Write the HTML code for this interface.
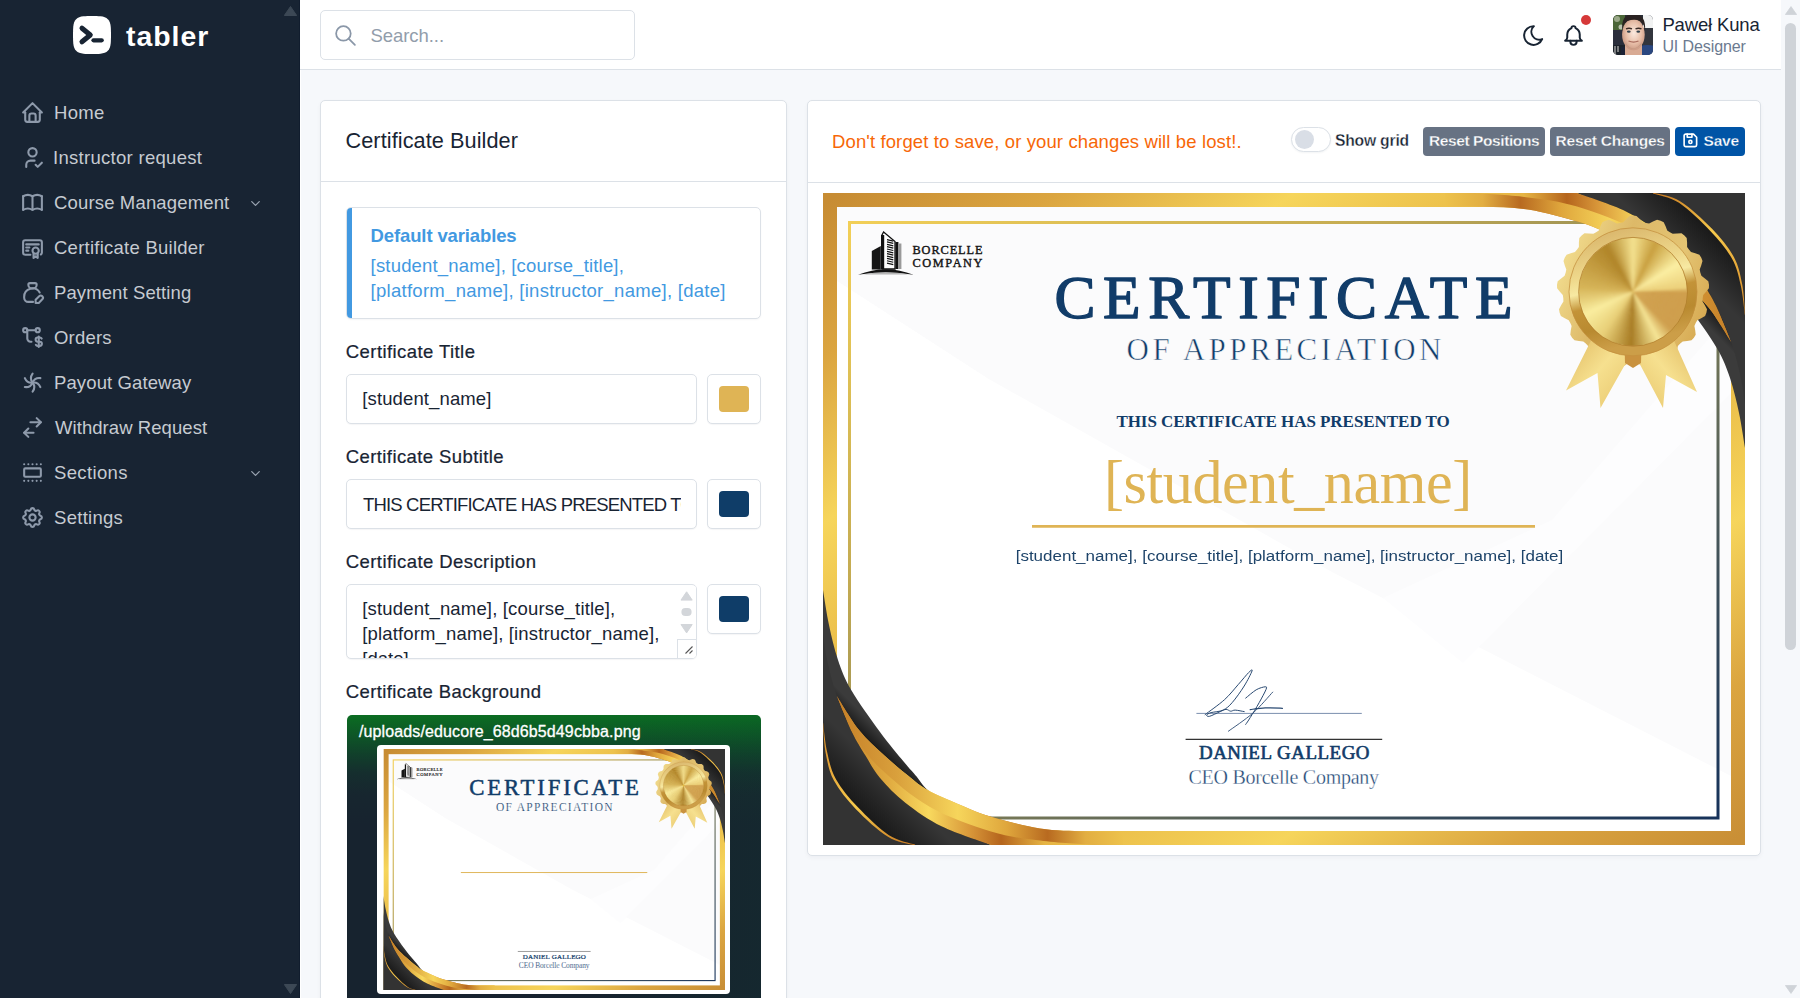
<!DOCTYPE html>
<html lang="en">
<head>
<meta charset="utf-8">
<title>Certificate Builder</title>
<style>
*{box-sizing:border-box;margin:0;padding:0}
html,body{width:1800px;height:998px;overflow:hidden}
body{background:#f6f8fb;font-family:"Liberation Sans",Arial,sans-serif;color:#182433;font-size:17.5px;position:relative}
.abs{position:absolute}
.t{position:absolute;white-space:pre;line-height:1}
svg{display:block}
.ico{fill:none;stroke:currentColor;stroke-width:2;stroke-linecap:round;stroke-linejoin:round}
/* sidebar */
.sidebar{position:absolute;left:0;top:0;width:300px;height:998px;background:#182433;box-shadow:1px 0 0 #fff;border-right:1px solid #111d2e}
.brand{position:absolute;left:73px;top:16px;width:38px;height:38px}
.brandtxt{left:125px;top:19px;font-size:28.4px;font-weight:700;color:#fff;letter-spacing:.9px;line-height:32px}
.nav{position:absolute;left:0;top:90px;width:281px;list-style:none}
.nav li{position:relative;height:45px}
.nav li svg.i{position:absolute;left:19.5px;top:9.5px;width:25px;height:25px;color:#8e9aab}
.nav li svg.chev{position:absolute;left:248px;top:16px;width:15px;height:15px;color:#9aa4b1;stroke-width:2}
.sarrow{position:absolute;left:284px;width:13px;height:10px;fill:#3c4855}
/* header */
.header{position:absolute;left:300px;top:0;width:1481px;height:70px;background:#fff;border-bottom:1px solid #dce1e7}
.search{position:absolute;left:20px;top:10px;width:315px;height:50px;border:1px solid #dce1e7;border-radius:5px;background:#fff}
.search svg{position:absolute;left:11.5px;top:11.5px;width:25px;height:25px;color:#8a97a8;stroke-width:1.7}
.hicon{position:absolute;width:25px;height:25px;color:#182433;stroke-width:1.9}
.dot{position:absolute;left:1280.5px;top:15px;width:10px;height:10px;border-radius:50%;background:#d63939}
.avatar{position:absolute;left:1312.5px;top:15px;width:40px;height:40px;border-radius:5px;overflow:hidden}
.uname{left:1362.5px;top:15px;font-size:17.5px;color:#182433;line-height:20px}
.urole{left:1362.5px;top:38px;font-size:15px;color:#6b7a90;line-height:18px}
/* scrollbar */
.vscroll{position:absolute;left:1781px;top:0;width:19px;height:998px;background:#f6f8fb}
.vscroll i{position:absolute;left:4px;top:23px;width:11px;height:627px;border-radius:6px;background:#cfd3d8}
.vscroll svg{position:absolute;left:3.5px;width:12px;height:9px;fill:#cfd3d8}
/* cards */
.card{position:absolute;background:#fff;border:1px solid #dce1e7;border-radius:5px;box-shadow:0 2px 4px rgba(24,36,51,.04)}
.card .hd{position:absolute;left:0;top:0;right:0;border-bottom:1px solid #dce1e7}
.lbl{font-size:17.5px;color:#182433;-webkit-text-stroke:.22px #182433}
.inp{position:absolute;height:50px;border:1px solid #dce1e7;border-radius:5px;background:#fff;overflow:hidden;box-shadow:0 1px 1px rgba(24,36,51,.04)}
.clr{position:absolute;width:54px;height:50px;border:1px solid #dce1e7;border-radius:5px;background:#fff;box-shadow:0 1px 1px rgba(24,36,51,.04)}
.clr i{position:absolute;left:10.5px;top:10.5px;width:30px;height:26px;border-radius:4px}
.btn{position:absolute;top:26px;height:29px;border-radius:4px;color:#fff;font-weight:700;font-size:15px}
</style>
</head>
<body>
<aside class="sidebar">
  <svg class="brand" viewBox="0 0 38 38"><path d="M10.500 .3C15 -.1 23 -.1 27.500 .3C34 .9 37.100 4 37.700 10.500C38.100 15 38.100 23 37.700 27.500C37.100 34 34 37.100 27.500 37.700C23 38.100 15 38.100 10.500 37.700C4 37.100 .9 34 .3 27.500C-.1 23 -.1 15 .3 10.500C.9 4 4 .9 10.500 .3Z" fill="#fff"/><path d="M9 12.200l8.300 6.800l-8.300 6.800" fill="none" stroke="#182433" stroke-width="5" stroke-linecap="round" stroke-linejoin="round"/><path d="M20.500 24.300h8.200" fill="none" stroke="#182433" stroke-width="4.300" stroke-linecap="round"/></svg>
  <span class="t" style="left:126.00px;top:22.00px;font-size:28.4px;font-weight:700;letter-spacing:1.000px;color:#fff;">tabler</span>
  <ul class="nav">
    <li><svg class="i ico" viewBox="0 0 24 24"><path d="M5 12l-2 0l9 -9l9 9l-2 0"/><path d="M5 12v7a2 2 0 0 0 2 2h10a2 2 0 0 0 2 -2v-7"/><path d="M9 21v-6a2 2 0 0 1 2 -2h2a2 2 0 0 1 2 2v6"/></svg><span class="t" style="left:54.00px;top:14.00px;font-size:18.5px;letter-spacing:0.333px;color:#c6cbd1;">Home</span></li>
    <li><svg class="i ico" viewBox="0 0 24 24"><path d="M8 7a4 4 0 1 0 8 0a4 4 0 0 0 -8 0"/><path d="M6 21v-2a4 4 0 0 1 4 -4h4"/><path d="M15 19l2 2l4 -4"/></svg><span class="t" style="left:53.00px;top:14.00px;font-size:18.5px;letter-spacing:0.294px;color:#c6cbd1;">Instructor request</span></li>
    <li><svg class="i ico" viewBox="0 0 24 24"><path d="M3 19a9 9 0 0 1 9 0a9 9 0 0 1 9 0"/><path d="M3 6a9 9 0 0 1 9 0a9 9 0 0 1 9 0"/><path d="M3 6l0 13"/><path d="M12 6l0 13"/><path d="M21 6l0 13"/></svg><span class="t" style="left:54.00px;top:14.00px;font-size:18.5px;letter-spacing:0.156px;color:#c6cbd1;">Course Management</span><svg class="chev ico" viewBox="0 0 24 24"><path d="M6 9l6 6l6 -6"/></svg></li>
    <li><svg class="i ico" viewBox="0 0 24 24"><path d="M15 15m-3 0a3 3 0 1 0 6 0a3 3 0 1 0 -6 0"/><path d="M13 17.500v4.500l2 -1.500l2 1.500v-4.500"/><path d="M10 19h-5a2 2 0 0 1 -2 -2v-10c0 -1.100 .9 -2 2 -2h14a2 2 0 0 1 2 2v10a2 2 0 0 1 -1 1.730"/><path d="M6 9l12 0"/><path d="M6 12l3 0"/><path d="M6 15l2 0"/></svg><span class="t" style="left:54.00px;top:14.00px;font-size:18.5px;letter-spacing:0.250px;color:#c6cbd1;">Certificate Builder</span></li>
    <li><svg class="i ico" viewBox="0 0 24 24"><path d="M9.500 3h5a1.500 1.500 0 0 1 1.500 1.500a3.500 3.500 0 0 1 -3.500 3.500h-1a3.500 3.500 0 0 1 -3.500 -3.500a1.500 1.500 0 0 1 1.500 -1.500"/><path d="M12.500 21h-4.500a4 4 0 0 1 -4 -4v-1a8 8 0 0 1 14.900 -4"/><path d="M18.420 15.610a2.100 2.100 0 0 1 2.970 2.970l-3.390 3.420h-3v-3l3.420 -3.390z"/></svg><span class="t" style="left:54.00px;top:14.00px;font-size:18.5px;letter-spacing:0.107px;color:#c6cbd1;">Payment Setting</span></li>
    <li><svg class="i ico" viewBox="0 0 24 24"><path d="M20.800 13a2 2 0 0 0 -1.800 -1h-2a2 2 0 1 0 0 4h2a2 2 0 1 1 0 4h-2a2 2 0 0 1 -1.800 -1"/><path d="M18 11v10"/><path d="M3 5a2 2 0 1 0 4 0a2 2 0 1 0 -4 0"/><path d="M15 5a2 2 0 1 0 4 0a2 2 0 1 0 -4 0"/><path d="M7 5h8"/><path d="M7 5v8a3 3 0 0 0 3 3h1"/></svg><span class="t" style="left:54.00px;top:14.00px;font-size:18.5px;letter-spacing:0.200px;color:#c6cbd1;">Orders</span></li>
    <li><svg class="i ico" viewBox="0 0 24 24"><path d="M12.1 12.1Q8.82 7.90 12.10 3.50"/><path d="M12.1 12.1Q14.10 7.16 19.55 7.80"/><path d="M12.1 12.1Q17.38 11.36 19.55 16.40"/><path d="M12.1 12.1Q15.38 16.30 12.10 20.70"/><path d="M12.1 12.1Q10.10 17.04 4.65 16.40"/><path d="M12.1 12.1Q6.82 12.84 4.65 7.80"/></svg><span class="t" style="left:54.00px;top:14.00px;font-size:18.5px;letter-spacing:0.115px;color:#c6cbd1;">Payout Gateway</span></li>
    <li><svg class="i ico" viewBox="0 0 24 24"><path d="M16 3l4 4l-4 4"/><path d="M10 7l10 0"/><path d="M8 13l-4 4l4 4"/><path d="M4 17l9 0"/></svg><span class="t" style="left:55.00px;top:14.00px;font-size:18.5px;letter-spacing:0.067px;color:#c6cbd1;">Withdraw Request</span></li>
    <li><svg class="i ico" viewBox="0 0 24 24"><path d="M20 20h.01"/><path d="M4 20h.01"/><path d="M8 20h.01"/><path d="M12 20h.01"/><path d="M16 20h.01"/><path d="M20 4h.01"/><path d="M4 4h.01"/><path d="M8 4h.01"/><path d="M12 4h.01"/><path d="M16 4h.01"/><path d="M4 8m0 1a1 1 0 0 1 1 -1h14a1 1 0 0 1 1 1v6a1 1 0 0 1 -1 1h-14a1 1 0 0 1 -1 -1z"/></svg><span class="t" style="left:54.00px;top:14.00px;font-size:18.5px;letter-spacing:0.357px;color:#c6cbd1;">Sections</span><svg class="chev ico" viewBox="0 0 24 24"><path d="M6 9l6 6l6 -6"/></svg></li>
    <li><svg class="i ico" viewBox="0 0 24 24"><path d="M10.325 4.317c.426 -1.756 2.924 -1.756 3.350 0a1.724 1.724 0 0 0 2.573 1.066c1.543 -.940 3.310 .826 2.370 2.370a1.724 1.724 0 0 0 1.065 2.572c1.756 .426 1.756 2.924 0 3.350a1.724 1.724 0 0 0 -1.066 2.573c.940 1.543 -.826 3.310 -2.370 2.370a1.724 1.724 0 0 0 -2.572 1.065c-.426 1.756 -2.924 1.756 -3.350 0a1.724 1.724 0 0 0 -2.573 -1.066c-1.543 .940 -3.310 -.826 -2.370 -2.370a1.724 1.724 0 0 0 -1.065 -2.572c-1.756 -.426 -1.756 -2.924 0 -3.350a1.724 1.724 0 0 0 1.066 -2.573c-.940 -1.543 .826 -3.310 2.370 -2.370c1 .608 2.296 .070 2.572 -1.065z"/><path d="M9 12a3 3 0 1 0 6 0a3 3 0 0 0 -6 0"/></svg><span class="t" style="left:54.00px;top:14.00px;font-size:18.5px;letter-spacing:0.286px;color:#c6cbd1;">Settings</span></li>
  </ul>
  <svg class="sarrow" style="top:6px" viewBox="0 0 13 10"><path d="M6.500 0.500L12.700 9.500H0.300Z" stroke="#3c4855" stroke-width="1" stroke-linejoin="round"/></svg>
  <svg class="sarrow" style="top:984px" viewBox="0 0 13 10"><path d="M6.500 9.500L12.700 0.500H0.300Z" stroke="#3c4855" stroke-width="1" stroke-linejoin="round"/></svg>
</aside>
<header class="header">
  <div class="search"><svg class="ico" viewBox="0 0 24 24"><path d="M10 10m-7 0a7 7 0 1 0 14 0a7 7 0 1 0 -14 0"/><path d="M21 21l-6 -6"/></svg><span class="t" style="left:49.50px;top:16.00px;font-size:18.5px;letter-spacing:-0.062px;color:#929dab;">Search...</span></div>
  <svg class="hicon ico" style="left:1220.500px;top:22.800px" viewBox="0 0 24 24"><path d="M12 3c.132 0 .263 0 .393 0a7.500 7.500 0 0 0 7.920 12.446a9 9 0 1 1 -8.313 -12.454z"/></svg>
  <svg class="hicon ico" style="left:1260.700px;top:22.800px" viewBox="0 0 24 24"><path d="M10 5a2 2 0 1 1 4 0a7 7 0 0 1 4 6v3a4 4 0 0 0 2 3h-16a4 4 0 0 0 2 -3v-3a7 7 0 0 1 4 -6"/><path d="M9 17v1a3 3 0 0 0 6 0v-1"/></svg>
  <i class="dot"></i>
  <div class="avatar"><svg viewBox="0 0 40 40" width="40" height="40"><defs><filter id="avb" x="-10%" y="-10%" width="120%" height="120%"><feGaussianBlur stdDeviation=".55"/></filter><radialGradient id="avskin" cx=".52" cy=".45" r=".6"><stop offset="0" stop-color="#fbe9df"/><stop offset=".55" stop-color="#e9c0aa"/><stop offset="1" stop-color="#c4907a"/></radialGradient></defs><rect width="40" height="40" fill="#2a2e38"/><g filter="url(#avb)"><rect x="-2" y="-2" width="14" height="17" fill="#4b6638"/><circle cx="4" cy="4" r="3" fill="#9aa889"/><circle cx="8" cy="12" r="2.500" fill="#b9c2ae"/><rect x="30" y="-2" width="12" height="15" fill="#f1f2f2"/><rect x="-2" y="15" width="14" height="17" fill="#2b2f3a"/><rect x="30" y="13" width="12" height="18" fill="#30343e"/><path d="M-2 42V30H12V42Z" fill="#1d212c"/><path d="M2 31v8M5 31v6" stroke="#d8d8d0" stroke-width="1"/><path d="M27 42V31Q34 29 42 31V42Z" fill="#2a4680"/><path d="M8 42V32H14V42Z" fill="#1b2236"/><path d="M12 42V29H29V42Z" fill="#d9ab94"/><ellipse cx="20.400" cy="19.500" rx="11.300" ry="15.800" fill="url(#avskin)"/><path d="M9.300 16.500Q7.500 -1 20.500 -1.500Q33.500 -1 32 16.500L30.800 10.500Q28.500 5.800 24 5Q19 4.300 14.500 6Q11.500 7.500 10.500 11Z" fill="#2a2220"/><path d="M13 13.800q3 -1.200 6 0M22.500 13.800q3 -1.200 6 0" stroke="#3a2b26" stroke-width="1.400" fill="none"/><ellipse cx="15.800" cy="16.600" rx="1.900" ry="1.200" fill="#33424d"/><ellipse cx="25.300" cy="16.600" rx="1.900" ry="1.200" fill="#33424d"/><path d="M15.500 26q5 2.200 10 0" stroke="#a86a5c" stroke-width="1.300" fill="none"/><path d="M12 27Q20 40 29 27Q27 33 20 34Q14 33 12 27Z" fill="#b98d78" opacity=".6"/></g></svg></div>
  <span class="t" style="left:1362.40px;top:16.00px;font-size:18.5px;letter-spacing:-0.156px;color:#182433;">Paweł Kuna</span>
  <span class="t" style="left:1362.40px;top:39.00px;font-size:16px;letter-spacing:-0.100px;color:#6b7a90;">UI Designer</span>
</header>
<div class="vscroll"><svg style="top:6px" viewBox="0 0 12 9"><path d="M6 .6L11.600 8.500H.4Z" stroke="#cfd3d8" stroke-width=".8" stroke-linejoin="round"/></svg><i></i><svg style="top:984.500px" viewBox="0 0 12 9"><path d="M6 8.400L11.600 .5H.4Z" stroke="#cfd3d8" stroke-width=".8" stroke-linejoin="round"/></svg></div>
<main>
<section class="card" style="left:320px;top:100px;width:467px;height:920px;border-bottom-left-radius:0;border-bottom-right-radius:0">
  <div class="hd" style="height:81px"></div>
  <h3 class="t" style="left:24.50px;top:29.00px;font-size:21.7px;letter-spacing:0.072px;font-weight:400;">Certificate Builder</h3>
  <div class="abs" style="left:25px;top:106px;width:415px;height:111.500px;border:1px solid #dce1e7;border-radius:5px;background:#fff;overflow:hidden;box-shadow:0 1px 2px rgba(24,36,51,.04)"><i class="abs" style="left:0;top:0;width:5px;height:111px;background:#4299e1"></i></div>
  <h4 class="t" style="left:49.60px;top:126.00px;font-size:18.5px;font-weight:700;letter-spacing:-0.125px;color:#4299e1;">Default variables</h4>
  <span class="t" style="left:49.60px;top:156.00px;font-size:18.5px;letter-spacing:0.180px;color:#4299e1;">[student_name], [course_title],</span>
  <span class="t" style="left:49.60px;top:181.00px;font-size:18.5px;letter-spacing:0.278px;color:#4299e1;">[platform_name], [instructor_name], [date]</span>
  <label class="t lbl" style="left:24.80px;top:242.00px;font-size:18.5px;letter-spacing:0.425px;">Certificate Title</label>
  <div class="inp" style="left:25px;top:273px;width:351px"><span class="t" style="left:15.30px;top:15.00px;font-size:18.5px;letter-spacing:0.123px;">[student_name]</span></div>
  <div class="clr" style="left:386px;top:273px"><i style="background:#dfb455"></i></div>
  <label class="t lbl" style="left:24.80px;top:347.00px;font-size:18.5px;letter-spacing:0.400px;">Certificate Subtitle</label>
  <div class="inp" style="left:25px;top:378px;width:351px;height:49.500px"><div class="abs" style="left:0;top:0;width:334.200px;height:47px;overflow:hidden"><span class="t" style="left:16.00px;top:16.00px;font-size:18.5px;letter-spacing:-0.835px;">THIS CERTIFICATE HAS PRESENTED TO</span></div></div>
  <div class="clr" style="left:386px;top:378px;height:49.500px"><i style="background:#0f3d68"></i></div>
  <label class="t lbl" style="left:24.80px;top:452.00px;font-size:18.5px;letter-spacing:0.418px;">Certificate Description</label>
  <div class="inp" style="left:25px;top:483px;width:351px;height:75px">
    <span class="t" style="left:15.30px;top:15.00px;font-size:18.5px;letter-spacing:0.167px;">[student_name], [course_title],</span>
    <span class="t" style="left:15.30px;top:40.00px;font-size:18.5px;letter-spacing:0.147px;">[platform_name], [instructor_name],</span>
    <span class="t" style="left:15.30px;top:65.00px;font-size:18.5px;">[date]</span>
    <svg class="abs" style="left:330px;top:1px;width:19px;height:72px" viewBox="0 0 19 72"><rect width="19" height="72" fill="#fff"/><path d="M9.600 5.800L15.200 14.100H4Z" fill="#d3d6da" stroke="#d3d6da" stroke-width="1" stroke-linejoin="round"/><rect x="4.400" y="21.900" width="10.200" height="8.100" rx="4" fill="#d3d6da"/><path d="M9.600 46.900L15.200 38.500H4Z" fill="#d3d6da" stroke="#d3d6da" stroke-width="1" stroke-linejoin="round"/><rect x=".5" y="53.500" width="19" height="19" fill="#fff" stroke="#dce1e7"/><path d="M8.500 67.500L15.500 60.500M12.500 67.500L15.500 64.500" stroke="#555" stroke-width="1.100" fill="none"/></svg>
  </div>
  <div class="clr" style="left:386px;top:483px"><i style="background:#0f3d68"></i></div>
  <label class="t lbl" style="left:24.80px;top:582.00px;font-size:18.5px;letter-spacing:0.381px;">Certificate Background</label>
  <div class="abs" style="left:26px;top:614px;width:413.500px;height:310px;border-radius:5px 5px 0 0;background:linear-gradient(90deg,rgba(8,70,45,0) 55%,rgba(8,70,45,.13)),linear-gradient(180deg,#0b6d22 0px,#0e5427 22px,#113f2b 40px,#152e2e 58px,#17262f 80px,#17232f 110px)">
    <span class="t" style="left:12.00px;top:9.00px;font-size:16px;letter-spacing:0.121px;color:#fff;-webkit-text-stroke:.3px #fff;">/uploads/educore_68d6b5d49cbba.png</span>
    <div class="abs" style="left:30.300px;top:30px;width:353px;height:249px;background:#fff;border-radius:4px"></div>
    <svg class="abs" style="left:35.600px;top:33.800px;width:342.500px;height:241.600px" viewBox="0 0 922 652"><use href="#certbg"/></svg>
  </div>
</section>

<section class="card" style="left:807px;top:100px;width:954px;height:756px">
  <div class="hd" style="height:82px"></div>
  <span class="t" style="left:24.00px;top:32.00px;font-size:18.5px;letter-spacing:0.118px;color:#f76707;">Don't forget to save, or your changes will be lost!.</span>
  <div class="abs" style="left:483px;top:26px;width:40px;height:25px;border:1px solid #dce1e7;border-radius:13px;background:#fff;box-shadow:0 1px 2px rgba(24,36,51,.05)"><i class="abs" style="left:3px;top:2px;width:19px;height:19px;border-radius:50%;background:#d9dee6"></i></div>
  <span class="t" style="left:527.00px;top:32.00px;font-size:15.7px;font-weight:700;letter-spacing:-0.213px;-webkit-text-stroke:.3px #fff;">Show grid</span>
  <div class="btn" style="left:615px;width:122px;background:#677283"><span class="t" style="left:6.00px;top:6.00px;font-size:15.5px;font-weight:700;letter-spacing:-0.407px;color:#fff;-webkit-text-stroke:.3px #677283;">Reset Positions</span></div>
  <div class="btn" style="left:742px;width:120px;background:#677283"><span class="t" style="left:5.60px;top:6.00px;font-size:15.5px;font-weight:700;letter-spacing:-0.217px;color:#fff;-webkit-text-stroke:.3px #677283;">Reset Changes</span></div>
  <div class="btn" style="left:867px;width:70px;background:#0054a6"><svg class="abs ico" style="left:6px;top:4.400px;width:18.750px;height:18.750px;stroke-width:2.100" viewBox="0 0 24 24"><path d="M6 4h10l4 4v10a2 2 0 0 1 -2 2h-12a2 2 0 0 1 -2 -2v-12a2 2 0 0 1 2 -2"/><path d="M12 14m-2 0a2 2 0 1 0 4 0a2 2 0 1 0 -4 0"/><path d="M14 4l0 4l-6 0l0 -4"/></svg><span class="t" style="left:28.50px;top:6.00px;font-size:15.5px;font-weight:700;letter-spacing:-0.167px;color:#fff;-webkit-text-stroke:.3px #0054a6;">Save</span></div>
  <div class="abs" id="certificate" style="left:15px;top:92px;width:922px;height:652px;overflow:hidden">
    <svg class="abs" style="left:0;top:0" width="922" height="652" viewBox="0 0 922 652">
<symbol id="certbg" viewBox="0 0 922 652">
<defs>
<linearGradient id="gGold" x1="0" y1="0" x2="1" y2="1"><stop offset="0" stop-color="#c78c33"/><stop offset=".12" stop-color="#dba540"/><stop offset=".25" stop-color="#f6d55b"/><stop offset=".35" stop-color="#ecc04b"/><stop offset=".5" stop-color="#e8ba47"/><stop offset=".65" stop-color="#ecc04b"/><stop offset=".75" stop-color="#f6d55b"/><stop offset=".88" stop-color="#dba540"/><stop offset="1" stop-color="#c98f36"/></linearGradient>
<linearGradient id="gInner" x1="0" y1="0" x2="1" y2="1"><stop offset="0" stop-color="#f2cf57"/><stop offset=".3" stop-color="#c4ab52"/><stop offset=".55" stop-color="#807f56"/><stop offset=".8" stop-color="#3d4f5a"/><stop offset="1" stop-color="#16325a"/></linearGradient>
<linearGradient id="gD1" gradientUnits="userSpaceOnUse" x1="0" y1="501" x2="10" y2="491"><stop offset="0" stop-color="#1d1d1d"/><stop offset="1" stop-color="#3b3b3b"/></linearGradient>
<linearGradient id="gD2" gradientUnits="userSpaceOnUse" x1="0" y1="580" x2="30" y2="550"><stop offset="0" stop-color="#191919"/><stop offset="1" stop-color="#363636"/></linearGradient>
<linearGradient id="gT" gradientUnits="userSpaceOnUse" x1="0" y1="534" x2="92" y2="652"><stop offset="0" stop-color="#d98c2a"/><stop offset=".55" stop-color="#f6c94c"/><stop offset="1" stop-color="#c6761f"/></linearGradient>
<linearGradient id="gBU" gradientUnits="userSpaceOnUse" x1="10" y1="0" x2="300" y2="0"><stop offset="0" stop-color="#c47d26"/><stop offset=".22" stop-color="#d9a03c"/><stop offset=".43" stop-color="#f6d55b"/><stop offset=".6" stop-color="#dfa63c"/><stop offset=".74" stop-color="#b86a20"/><stop offset=".87" stop-color="#e2ae42"/><stop offset="1" stop-color="#edc24c"/></linearGradient>
<linearGradient id="gBL" gradientUnits="userSpaceOnUse" x1="10" y1="0" x2="300" y2="0"><stop offset="0" stop-color="#c07a25"/><stop offset=".19" stop-color="#e0aa40"/><stop offset=".33" stop-color="#f8d95e"/><stop offset=".47" stop-color="#d9983a"/><stop offset=".58" stop-color="#b5651d"/><stop offset=".73" stop-color="#e6b544"/><stop offset="1" stop-color="#edc24c"/></linearGradient>
<linearGradient id="gRib" x1="0" y1="0" x2="1" y2="1"><stop offset="0" stop-color="#d9ad52"/><stop offset=".5" stop-color="#f6e08f"/><stop offset="1" stop-color="#e4bf63"/></linearGradient>
<linearGradient id="gRib2" x1="1" y1="0" x2="0" y2="1"><stop offset="0" stop-color="#d9ad52"/><stop offset=".5" stop-color="#f6e08f"/><stop offset="1" stop-color="#e4bf63"/></linearGradient>
<linearGradient id="gScal" x1="0" y1=".3" x2="1" y2=".7"><stop offset="0" stop-color="#f3de90"/><stop offset=".35" stop-color="#ddb968"/><stop offset=".7" stop-color="#e4c473"/><stop offset="1" stop-color="#d6a850"/></linearGradient>
<linearGradient id="gRing" x1="0" y1="0" x2=".25" y2="1"><stop offset="0" stop-color="#d7b268"/><stop offset=".38" stop-color="#efd98c"/><stop offset=".5" stop-color="#f7e9a2"/><stop offset=".63" stop-color="#c39338"/><stop offset=".82" stop-color="#b98a30"/><stop offset="1" stop-color="#cc9e48"/></linearGradient>
</defs>
<rect width="922" height="652" fill="#fff"/>
<path d="M14 14H908V583L509 379L164 185L14 88Z" fill="#fbfbfc"/>
<path d="M164 185L14 330V88Z" fill="#fff"/>
<path d="M729 327L908 120V200L640 470L560 405Z" fill="#fdfdfe"/>
<rect x="7" y="7" width="908" height="638" fill="none" stroke="url(#gGold)" stroke-width="14"/>
<rect x="26.500" y="29.500" width="868.500" height="595.500" fill="none" stroke="url(#gInner)" stroke-width="3"/>
<g id="crn"><path d="M0.0 397.0C1.0 402.8 3.5 420.3 6.0 432.0C8.5 443.7 11.3 456.2 15.0 467.0C18.7 477.8 21.2 485.0 28.2 497.0C35.2 509.0 48.2 527.0 57.0 539.0C65.8 551.0 74.9 561.6 81.0 569.0C87.1 576.4 89.7 578.9 93.6 583.6C97.5 588.3 97.7 590.6 104.6 597.0C111.5 603.4 124.8 612.8 135.0 622.0C145.2 631.2 160.8 647.0 166.0 652.0L0 652Z" fill="url(#gD1)"/>
<path d="M0.0 440.0C0.7 444.5 1.9 456.5 4.2 467.0C6.5 477.5 9.7 491.0 13.8 503.0C17.9 515.0 24.1 529.0 28.9 539.0C33.7 549.0 38.0 555.3 42.7 563.0C47.4 570.7 50.4 577.2 57.0 585.0C63.6 592.8 72.3 601.9 82.6 610.0C92.9 618.1 104.8 626.6 119.0 633.6C133.2 640.6 159.8 648.9 168.0 652.0L0 652Z" fill="url(#gD2)"/>
<path d="M0.0 530.0C0.6 535.0 1.5 550.5 3.5 560.0C5.5 569.5 7.0 577.8 12.0 587.0C17.0 596.2 24.8 605.7 33.7 615.0C42.6 624.3 55.8 636.8 65.5 643.0C75.2 649.2 87.6 650.5 92.0 652.0L0 652Z" fill="#333"/>
<path d="M-0.1 530.0C0.3 535.0 0.9 550.6 2.7 560.2C4.6 569.8 6.0 578.3 10.9 587.6C15.9 596.9 23.7 606.6 32.7 616.0C41.7 625.3 55.1 637.8 65.0 643.8C74.8 649.9 87.4 651.0 91.9 652.4L92.1 651.6C87.8 650.0 75.6 648.4 66.0 642.2C56.5 635.9 43.5 623.3 34.7 614.0C25.9 604.7 18.1 595.5 13.1 586.4C8.0 577.4 6.4 569.2 4.3 559.8C2.1 550.4 0.8 535.0 0.1 530.0Z" fill="url(#gT)"/>
<path d="M13.8 503.0C16.3 509.0 24.1 529.0 28.9 539.0C33.7 549.0 38.0 555.3 42.7 563.0C47.4 570.7 50.4 577.2 57.0 585.0C63.6 592.8 72.3 601.9 82.6 610.0C92.9 618.1 104.8 626.6 119.0 633.6C133.2 640.6 159.8 648.9 168.0 652.0L300 652L300.0 638.5C293.7 638.5 275.8 638.8 262.0 638.3C248.2 637.8 233.1 638.0 217.0 635.5C200.9 633.0 179.4 627.1 165.7 623.0C152.0 618.9 145.2 615.3 135.0 611.0C124.8 606.7 112.4 601.3 104.6 597.0C96.8 592.7 95.1 590.7 88.0 585.0C80.9 579.3 70.7 571.0 62.0 563.0C53.3 555.0 44.0 547.0 36.0 537.0C28.0 527.0 17.5 508.7 13.8 503.0Z" fill="url(#gBL)"/>
<path d="M13.8 503.0C17.5 508.7 28.0 527.0 36.0 537.0C44.0 547.0 53.3 555.0 62.0 563.0C70.7 571.0 80.9 579.3 88.0 585.0C95.1 590.7 96.8 592.7 104.6 597.0C112.4 601.3 124.8 606.7 135.0 611.0C145.2 615.3 152.0 618.9 165.7 623.0C179.4 627.1 200.9 633.0 217.0 635.5C233.1 638.0 248.2 637.8 262.0 638.3C275.8 638.8 293.7 638.5 300.0 638.5L300 652L270 652L270.0 652.0C261.2 651.3 234.0 649.9 217.0 647.6C200.0 645.4 186.3 644.1 168.0 638.5C149.7 632.9 125.3 624.4 107.0 614.0C88.7 603.6 70.3 587.5 58.0 576.0C45.7 564.5 40.4 557.2 33.0 545.0C25.6 532.8 17.0 510.0 13.8 503.0Z" fill="url(#gBU)"/></g>
<use href="#crn" transform="rotate(180 461 326)"/>
<path d="M209 333.400H712" stroke="#dfb455" stroke-width="2.600"/>
<path d="M35 81.800Q62.800 70.500 90.500 81.800Q62.800 76.500 35 81.800Z" fill="#111"/>
<path d="M40 81.500Q62.800 77 86 81.500Z" fill="#999" opacity=".7"/>
<path d="M48.800 76.500V58L57.800 53V76.500Z" fill="#151515"/>
<path d="M59 76V42L60.600 39L72 48.600V76Z" fill="#fff" stroke="#111" stroke-width="1.300" stroke-linejoin="miter"/>
<rect x="58" y="42" width="3.200" height="34" fill="#111"/>
<path d="M64 46.60L70.300 48.10" stroke="#111" stroke-width="1.250"/>
<path d="M64 48.95L70.300 50.45" stroke="#111" stroke-width="1.250"/>
<path d="M64 51.30L70.300 52.80" stroke="#111" stroke-width="1.250"/>
<path d="M64 53.65L70.300 55.15" stroke="#111" stroke-width="1.250"/>
<path d="M64 56.00L70.300 57.50" stroke="#111" stroke-width="1.250"/>
<path d="M64 58.35L70.300 59.85" stroke="#111" stroke-width="1.250"/>
<path d="M64 60.70L70.300 62.20" stroke="#111" stroke-width="1.250"/>
<path d="M64 63.05L70.300 64.55" stroke="#111" stroke-width="1.250"/>
<path d="M64 65.40L70.300 66.90" stroke="#111" stroke-width="1.250"/>
<path d="M64 67.75L70.300 69.25" stroke="#111" stroke-width="1.250"/>
<path d="M64 70.10L70.300 71.60" stroke="#111" stroke-width="1.250"/>
<rect x="72.400" y="49" width="3" height="27" fill="#111"/>
<rect x="75.400" y="50.500" width="3" height="25.500" fill="#9a9a9a"/>
<text x="89.500" y="60.700" style="font-family:'Liberation Serif','Times New Roman',serif;font-size:12.300px" fill="#141414" stroke="#141414" stroke-width=".4" textLength="70" lengthAdjust="spacing">BORCELLE</text>
<text x="89.500" y="74" style="font-family:'Liberation Serif','Times New Roman',serif;font-size:12.300px" fill="#141414" stroke="#141414" stroke-width=".4" textLength="70" lengthAdjust="spacing">COMPANY</text>
<text x="231.500" y="125" style="font-family:'Liberation Serif','Times New Roman',serif;font-size:61.500px" fill="#113c69" stroke="#113c69" stroke-width="1.400" stroke-linejoin="round" textLength="458" lengthAdjust="spacing">CERTIFICATE</text>
<text x="303.500" y="166.700" style="font-family:'Liberation Serif','Times New Roman',serif;font-size:31px" fill="#113c69" stroke="#fcfcfd" stroke-width=".55" textLength="315" lengthAdjust="spacing">OF APPRECIATION</text>
<path d="M362.600 546.400H559.200" stroke="#333" stroke-width="1.300"/>
<text x="376" y="566.400" style="font-family:'Liberation Serif','Times New Roman',serif;font-size:18.900px" fill="#113c69" stroke="#113c69" stroke-width=".65" textLength="170.500" lengthAdjust="spacing">DANIEL GALLEGO</text>
<text x="365.500" y="590.500" style="font-family:'Liberation Serif','Times New Roman',serif;font-size:20px" fill="#1d4674" stroke="#fff" stroke-width=".3" textLength="190.500" lengthAdjust="spacing">CEO Borcelle Company</text>
<path d="M810.0 22.5L813.5 22.9L816.7 26.0L819.7 29.2L822.9 30.0L826.1 30.4L830.0 28.4L834.1 26.7L837.6 27.7L840.7 29.3L842.6 33.3L844.2 37.4L846.9 39.3L849.7 40.8L854.1 40.4L858.5 40.3L861.4 42.4L863.7 45.1L864.1 49.5L864.1 53.9L865.9 56.6L868.0 59.1L872.2 60.3L876.4 61.8L878.3 64.8L879.5 68.1L878.2 72.4L876.7 76.5L877.3 79.6L878.4 82.7L881.9 85.4L885.3 88.3L886.0 91.8L885.9 95.3L883.1 98.8L880.2 102.0L879.7 105.3L879.6 108.5L881.9 112.2L884.0 116.2L883.4 119.7L882.1 122.9L878.2 125.2L874.3 127.2L872.7 130.0L871.4 133.0L872.2 137.3L872.7 141.7L870.9 144.8L868.5 147.3L864.1 148.1L859.7 148.5L857.2 150.5L854.9 152.9L854.1 157.2L852.9 161.5L850.2 163.7L847.0 165.2L842.6 164.3L838.4 163.1L835.3 164.1L832.3 165.5L830.0 169.2L827.4 172.8L824.0 173.8L820.5 174.1L816.7 171.6L813.2 169.0L810.0 168.8L806.8 169.0L803.3 171.6L799.5 174.1L796.0 173.8L792.6 172.8L790.0 169.2L787.7 165.5L784.7 164.1L781.6 163.1L777.4 164.3L773.0 165.2L769.8 163.7L767.1 161.5L765.9 157.2L765.1 152.9L762.8 150.5L760.3 148.5L755.9 148.1L751.5 147.3L749.1 144.8L747.3 141.7L747.8 137.3L748.6 133.0L747.3 130.0L745.7 127.2L741.8 125.2L737.9 122.9L736.6 119.7L736.0 116.2L738.1 112.2L740.4 108.5L740.3 105.3L739.8 102.0L736.9 98.8L734.1 95.3L734.0 91.8L734.7 88.3L738.1 85.4L741.6 82.7L742.7 79.6L743.3 76.5L741.8 72.4L740.5 68.1L741.7 64.8L743.6 61.8L747.8 60.3L752.0 59.1L754.1 56.6L755.9 53.9L755.9 49.5L756.3 45.1L758.6 42.4L761.5 40.3L765.9 40.4L770.3 40.8L773.1 39.3L775.8 37.4L777.4 33.3L779.3 29.3L782.4 27.7L785.9 26.7L790.0 28.4L793.9 30.4L797.1 30.0L800.3 29.2L803.3 26.0L806.5 22.9L810.0 22.5Z" fill="url(#gScal)"/>
<path d="M777.800 128L817.800 143.500L777.500 215L774.500 180L743 197.500Z" fill="url(#gRib)"/>
<path d="M842.200 128L802.200 143.500L840 215L843 182L874 199Z" fill="url(#gRib2)"/>
<path d="M801.500 150H818.500L818 170L810 175L802 170Z" fill="#c9923f"/>
<circle cx="810" cy="98.8" r="59" fill="none" stroke="url(#gRing)" stroke-width="10"/>
<circle cx="810" cy="98.8" r="64" fill="none" stroke="#c48f3c" stroke-width=".9" opacity=".85"/>
<clipPath id="mclip"><circle cx="810" cy="98.8" r="54"/></clipPath><filter id="mblur" x="-5%" y="-5%" width="110%" height="110%"><feGaussianBlur stdDeviation="1"/></filter><g clip-path="url(#mclip)"><g filter="url(#mblur)"><path d="M810 98.8L810.0 38.8A60 60 0 0 1 813.9 38.9Z" fill="#f1de8b"/><path d="M810 98.8L813.1 38.9A60 60 0 0 1 817.0 39.2Z" fill="#ecd682"/><path d="M810 98.8L816.3 39.1A60 60 0 0 1 820.1 39.7Z" fill="#e7ce78"/><path d="M810 98.8L819.4 39.5A60 60 0 0 1 823.2 40.3Z" fill="#e2c66e"/><path d="M810 98.8L822.5 40.1A60 60 0 0 1 826.2 41.0Z" fill="#ddbe65"/><path d="M810 98.8L825.5 40.8A60 60 0 0 1 829.2 42.0Z" fill="#d8b65b"/><path d="M810 98.8L828.5 41.7A60 60 0 0 1 832.2 43.1Z" fill="#d2af52"/><path d="M810 98.8L831.5 42.8A60 60 0 0 1 835.1 44.3Z" fill="#cda748"/><path d="M810 98.8L834.4 44.0A60 60 0 0 1 837.9 45.7Z" fill="#caa142"/><path d="M810 98.8L837.2 45.3A60 60 0 0 1 840.6 47.2Z" fill="#cea84a"/><path d="M810 98.8L840.0 46.8A60 60 0 0 1 843.3 48.9Z" fill="#d3b054"/><path d="M810 98.8L842.7 48.5A60 60 0 0 1 845.9 50.7Z" fill="#d7b75c"/><path d="M810 98.8L845.3 50.3A60 60 0 0 1 848.3 52.6Z" fill="#dcbe66"/><path d="M810 98.8L847.8 52.2A60 60 0 0 1 850.7 54.7Z" fill="#e0c56e"/><path d="M810 98.8L850.1 54.2A60 60 0 0 1 852.9 56.9Z" fill="#e5cc78"/><path d="M810 98.8L852.4 56.4A60 60 0 0 1 855.1 59.2Z" fill="#ead380"/><path d="M810 98.8L854.6 58.7A60 60 0 0 1 857.1 61.6Z" fill="#eedb8a"/><path d="M810 98.8L856.6 61.0A60 60 0 0 1 859.0 64.1Z" fill="#f3e292"/><path d="M810 98.8L858.5 63.5A60 60 0 0 1 860.7 66.7Z" fill="#f7e99c"/><path d="M810 98.8L860.3 66.1A60 60 0 0 1 862.3 69.4Z" fill="#fbeea2"/><path d="M810 98.8L862.0 68.8A60 60 0 0 1 863.8 72.2Z" fill="#f9eb9e"/><path d="M810 98.8L863.5 71.6A60 60 0 0 1 865.1 75.1Z" fill="#f8e899"/><path d="M810 98.8L864.8 74.4A60 60 0 0 1 866.3 78.0Z" fill="#f6e495"/><path d="M810 98.8L866.0 77.3A60 60 0 0 1 867.3 81.0Z" fill="#f4e191"/><path d="M810 98.8L867.1 80.3A60 60 0 0 1 868.1 84.0Z" fill="#f3de8c"/><path d="M810 98.8L868.0 83.3A60 60 0 0 1 868.8 87.0Z" fill="#f1db88"/><path d="M810 98.8L868.7 86.3A60 60 0 0 1 869.4 90.1Z" fill="#efd784"/><path d="M810 98.8L869.3 89.4A60 60 0 0 1 869.7 93.3Z" fill="#eed47f"/><path d="M810 98.8L869.7 92.5A60 60 0 0 1 870.0 96.4Z" fill="#ecd17b"/><path d="M810 98.8L869.9 95.7A60 60 0 0 1 870.0 99.5Z" fill="#dab15e"/><path d="M810 98.8L870.0 98.8A60 60 0 0 1 869.9 102.7Z" fill="#cf9f4e"/><path d="M810 98.8L869.9 101.9A60 60 0 0 1 869.6 105.8Z" fill="#cf9f4e"/><path d="M810 98.8L869.7 105.1A60 60 0 0 1 869.1 108.9Z" fill="#cf9f4e"/><path d="M810 98.8L869.3 108.2A60 60 0 0 1 868.5 112.0Z" fill="#cf9f4e"/><path d="M810 98.8L868.7 111.3A60 60 0 0 1 867.8 115.0Z" fill="#cf9f4e"/><path d="M810 98.8L868.0 114.3A60 60 0 0 1 866.8 118.0Z" fill="#cf9f4e"/><path d="M810 98.8L867.1 117.3A60 60 0 0 1 865.7 121.0Z" fill="#cf9f4e"/><path d="M810 98.8L866.0 120.3A60 60 0 0 1 864.5 123.9Z" fill="#cf9f4e"/><path d="M810 98.8L864.8 123.2A60 60 0 0 1 863.1 126.7Z" fill="#cf9f4e"/><path d="M810 98.8L863.5 126.0A60 60 0 0 1 861.6 129.4Z" fill="#cf9f4e"/><path d="M810 98.8L862.0 128.8A60 60 0 0 1 859.9 132.1Z" fill="#cf9f4e"/><path d="M810 98.8L860.3 131.5A60 60 0 0 1 858.1 134.7Z" fill="#cf9f4e"/><path d="M810 98.8L858.5 134.1A60 60 0 0 1 856.2 137.1Z" fill="#cf9f4e"/><path d="M810 98.8L856.6 136.6A60 60 0 0 1 854.1 139.5Z" fill="#cf9f4e"/><path d="M810 98.8L854.6 138.9A60 60 0 0 1 851.9 141.7Z" fill="#cf9f4e"/><path d="M810 98.8L852.4 141.2A60 60 0 0 1 849.6 143.9Z" fill="#d2a554"/><path d="M810 98.8L850.1 143.4A60 60 0 0 1 847.2 145.9Z" fill="#d9b261"/><path d="M810 98.8L847.8 145.4A60 60 0 0 1 844.7 147.8Z" fill="#e0be6e"/><path d="M810 98.8L845.3 147.3A60 60 0 0 1 842.1 149.5Z" fill="#e6ca7a"/><path d="M810 98.8L842.7 149.1A60 60 0 0 1 839.4 151.1Z" fill="#edd787"/><path d="M810 98.8L840.0 150.8A60 60 0 0 1 836.6 152.6Z" fill="#f4e394"/><path d="M810 98.8L837.2 152.3A60 60 0 0 1 833.7 153.9Z" fill="#efdc8d"/><path d="M810 98.8L834.4 153.6A60 60 0 0 1 830.8 155.1Z" fill="#e7d281"/><path d="M810 98.8L831.5 154.8A60 60 0 0 1 827.8 156.1Z" fill="#dfc776"/><path d="M810 98.8L828.5 155.9A60 60 0 0 1 824.8 156.9Z" fill="#d7bd6b"/><path d="M810 98.8L825.5 156.8A60 60 0 0 1 821.8 157.6Z" fill="#d0b25f"/><path d="M810 98.8L822.5 157.5A60 60 0 0 1 818.7 158.2Z" fill="#c8a854"/><path d="M810 98.8L819.4 158.1A60 60 0 0 1 815.5 158.5Z" fill="#c09d49"/><path d="M810 98.8L816.3 158.5A60 60 0 0 1 812.4 158.8Z" fill="#b9933d"/><path d="M810 98.8L813.1 158.7A60 60 0 0 1 809.3 158.8Z" fill="#b18832"/><path d="M810 98.8L810.0 158.8A60 60 0 0 1 806.1 158.7Z" fill="#a97e27"/><path d="M810 98.8L806.9 158.7A60 60 0 0 1 803.0 158.4Z" fill="#ad822b"/><path d="M810 98.8L803.7 158.5A60 60 0 0 1 799.9 157.9Z" fill="#b38a33"/><path d="M810 98.8L800.6 158.1A60 60 0 0 1 796.8 157.3Z" fill="#b8913a"/><path d="M810 98.8L797.5 157.5A60 60 0 0 1 793.8 156.6Z" fill="#be9942"/><path d="M810 98.8L794.5 156.8A60 60 0 0 1 790.8 155.6Z" fill="#c4a049"/><path d="M810 98.8L791.5 155.9A60 60 0 0 1 787.8 154.5Z" fill="#caa851"/><path d="M810 98.8L788.5 154.8A60 60 0 0 1 784.9 153.3Z" fill="#d0b059"/><path d="M810 98.8L785.6 153.6A60 60 0 0 1 782.1 151.9Z" fill="#d6b760"/><path d="M810 98.8L782.8 152.3A60 60 0 0 1 779.4 150.4Z" fill="#dbbf68"/><path d="M810 98.8L780.0 150.8A60 60 0 0 1 776.7 148.7Z" fill="#e1c66f"/><path d="M810 98.8L777.3 149.1A60 60 0 0 1 774.1 146.9Z" fill="#e7ce77"/><path d="M810 98.8L774.7 147.3A60 60 0 0 1 771.7 145.0Z" fill="#ead27b"/><path d="M810 98.8L772.2 145.4A60 60 0 0 1 769.3 142.9Z" fill="#ebd57f"/><path d="M810 98.8L769.9 143.4A60 60 0 0 1 767.1 140.7Z" fill="#edd883"/><path d="M810 98.8L767.6 141.2A60 60 0 0 1 764.9 138.4Z" fill="#efdb87"/><path d="M810 98.8L765.4 138.9A60 60 0 0 1 762.9 136.0Z" fill="#f1de8b"/><path d="M810 98.8L763.4 136.6A60 60 0 0 1 761.0 133.5Z" fill="#f2e18f"/><path d="M810 98.8L761.5 134.1A60 60 0 0 1 759.3 130.9Z" fill="#f4e493"/><path d="M810 98.8L759.7 131.5A60 60 0 0 1 757.7 128.2Z" fill="#f6e797"/><path d="M810 98.8L758.0 128.8A60 60 0 0 1 756.2 125.4Z" fill="#f8ea9b"/><path d="M810 98.8L756.5 126.0A60 60 0 0 1 754.9 122.5Z" fill="#faed9f"/><path d="M810 98.8L755.2 123.2A60 60 0 0 1 753.7 119.6Z" fill="#f7e99a"/><path d="M810 98.8L754.0 120.3A60 60 0 0 1 752.7 116.6Z" fill="#f3e393"/><path d="M810 98.8L752.9 117.3A60 60 0 0 1 751.9 113.6Z" fill="#f0de8c"/><path d="M810 98.8L752.0 114.3A60 60 0 0 1 751.2 110.6Z" fill="#ecd884"/><path d="M810 98.8L751.3 111.3A60 60 0 0 1 750.6 107.5Z" fill="#e9d27d"/><path d="M810 98.8L750.7 108.2A60 60 0 0 1 750.3 104.3Z" fill="#e5cc76"/><path d="M810 98.8L750.3 105.1A60 60 0 0 1 750.0 101.2Z" fill="#e1c66f"/><path d="M810 98.8L750.1 101.9A60 60 0 0 1 750.0 98.1Z" fill="#dec168"/><path d="M810 98.8L750.0 98.8A60 60 0 0 1 750.1 94.9Z" fill="#dabb60"/><path d="M810 98.8L750.1 95.7A60 60 0 0 1 750.4 91.8Z" fill="#d7b559"/><path d="M810 98.8L750.3 92.5A60 60 0 0 1 750.9 88.7Z" fill="#d4b256"/><path d="M810 98.8L750.7 89.4A60 60 0 0 1 751.5 85.6Z" fill="#d2af53"/><path d="M810 98.8L751.3 86.3A60 60 0 0 1 752.2 82.6Z" fill="#d0ad51"/><path d="M810 98.8L752.0 83.3A60 60 0 0 1 753.2 79.6Z" fill="#ceaa4e"/><path d="M810 98.8L752.9 80.3A60 60 0 0 1 754.3 76.6Z" fill="#cca74b"/><path d="M810 98.8L754.0 77.3A60 60 0 0 1 755.5 73.7Z" fill="#caa549"/><path d="M810 98.8L755.2 74.4A60 60 0 0 1 756.9 70.9Z" fill="#c8a246"/><path d="M810 98.8L756.5 71.6A60 60 0 0 1 758.4 68.2Z" fill="#c69f43"/><path d="M810 98.8L758.0 68.8A60 60 0 0 1 760.1 65.5Z" fill="#c49d41"/><path d="M810 98.8L759.7 66.1A60 60 0 0 1 761.9 62.9Z" fill="#c29a3e"/><path d="M810 98.8L761.5 63.5A60 60 0 0 1 763.8 60.5Z" fill="#c0983c"/><path d="M810 98.8L763.4 61.0A60 60 0 0 1 765.9 58.1Z" fill="#bd9539"/><path d="M810 98.8L765.4 58.7A60 60 0 0 1 768.1 55.9Z" fill="#bb9236"/><path d="M810 98.8L767.6 56.4A60 60 0 0 1 770.4 53.7Z" fill="#b99034"/><path d="M810 98.8L769.9 54.2A60 60 0 0 1 772.8 51.7Z" fill="#b78d31"/><path d="M810 98.8L772.2 52.2A60 60 0 0 1 775.3 49.8Z" fill="#b58b2f"/><path d="M810 98.8L774.7 50.3A60 60 0 0 1 777.9 48.1Z" fill="#b3882c"/><path d="M810 98.8L777.3 48.5A60 60 0 0 1 780.6 46.5Z" fill="#b18529"/><path d="M810 98.8L780.0 46.8A60 60 0 0 1 783.4 45.0Z" fill="#b3892d"/><path d="M810 98.8L782.8 45.3A60 60 0 0 1 786.3 43.7Z" fill="#ba9238"/><path d="M810 98.8L785.6 44.0A60 60 0 0 1 789.2 42.5Z" fill="#c19c42"/><path d="M810 98.8L788.5 42.8A60 60 0 0 1 792.2 41.5Z" fill="#c8a54c"/><path d="M810 98.8L791.5 41.7A60 60 0 0 1 795.2 40.7Z" fill="#cfae57"/><path d="M810 98.8L794.5 40.8A60 60 0 0 1 798.2 40.0Z" fill="#d5b861"/><path d="M810 98.8L797.5 40.1A60 60 0 0 1 801.3 39.4Z" fill="#dcc16c"/><path d="M810 98.8L800.6 39.5A60 60 0 0 1 804.5 39.1Z" fill="#e3ca76"/><path d="M810 98.8L803.7 39.1A60 60 0 0 1 807.6 38.8Z" fill="#ead480"/><path d="M810 98.8L806.9 38.9A60 60 0 0 1 810.7 38.8Z" fill="#f1dd8b"/></g></g>
<circle cx="810" cy="98.8" r="54.400" fill="none" stroke="#b07d2c" stroke-width="1" opacity=".75"/>
</symbol>
      <use href="#certbg"/>
    </svg>
    <svg class="abs" style="left:370px;top:474px" width="175" height="68" viewBox="0 0 175 68" fill="none" stroke="#2a4a72" stroke-linecap="round" stroke-linejoin="round"><path d="M3.800 46.400H168.400" stroke="#7a8fae" stroke-width="1"/><path d="M12.1 47.6C15.3 45.1 26.1 37.6 31.6 32.6C37.1 27.6 41.2 22.1 45.2 17.6C49.2 13.1 53.4 7.8 55.7 5.5C58.0 3.2 59.8 1.8 59.0 4.0C58.2 6.2 54.5 13.7 51.2 19.0C47.9 24.3 42.7 31.6 39.2 35.6C35.7 39.6 33.6 41.4 30.1 43.1C26.6 44.8 20.9 44.8 18.1 45.6C15.4 46.4 13.8 47.4 13.6 48.0C13.3 48.6 14.4 49.9 16.6 49.3C18.9 48.7 24.4 45.8 27.1 44.6C29.9 43.5 31.3 42.5 33.1 42.4C34.9 42.3 36.2 44.1 37.7 44.2C39.2 44.3 40.0 43.0 42.2 43.1C44.5 43.2 49.7 44.4 51.2 44.6" stroke-width="1"/><path d="M52.7 31.1C54.5 29.7 60.0 24.7 63.2 22.8C66.5 20.9 70.6 19.9 72.2 19.8C73.8 19.8 74.0 19.9 73.0 22.5C72.0 25.1 68.8 30.9 66.2 35.6C63.6 40.3 59.5 47.0 57.2 50.6C55.0 54.2 53.5 56.3 52.7 57.4" stroke-width="1"/><path d="M79.7 25.1C76.4 28.6 67.4 39.5 60.0 46.0C52.6 52.5 39.5 61.2 35.4 64.2" stroke-width=".9"/><path d="M57.2 42.6C59.7 42.3 66.8 41.1 72.2 40.9C77.6 40.7 86.6 41.2 89.5 41.3" stroke-width="1.200"/></svg>
    <span class="t" style="left:293.40px;top:220.00px;font-size:17px;font-family:'Liberation Serif',serif;font-weight:700;letter-spacing:-0.044px;color:#113c69;">THIS CERTIFICATE HAS PRESENTED TO</span>
    <span class="t" style="left:281.00px;top:260.00px;font-size:60px;font-family:'Liberation Serif',serif;letter-spacing:-0.385px;color:#dfb455;transform:scale(1,1.03);transform-origin:4px 50px;">[student_name]</span>
    <span class="t" style="left:192.70px;top:354.00px;font-size:17px;letter-spacing:-0.007px;color:#1d4369;transform:scale(1,0.9);transform-origin:1px 14px;">[student_name], [course_title], [platform_name], [instructor_name], [date]</span>
  </div>
</section>
</main>
</body>
</html>
